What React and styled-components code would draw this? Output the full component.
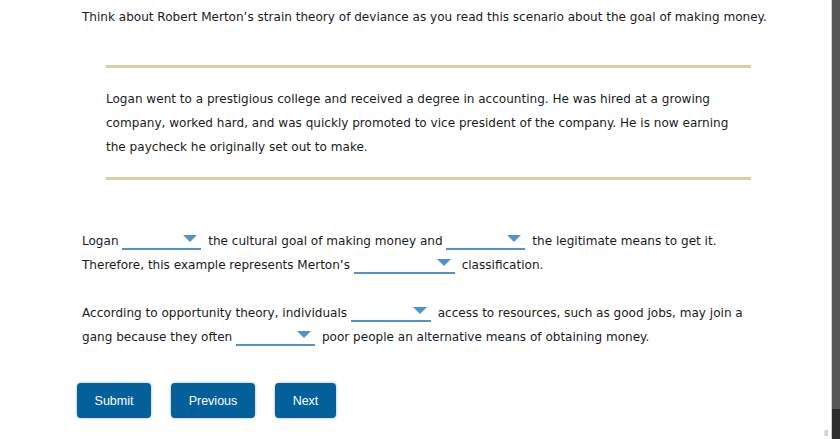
import React from "react";
import styled, { createGlobalStyle } from "styled-components";

const Global = createGlobalStyle`
  html, body { margin: 0; padding: 0; background: #fff; }
  body { font-family: "DejaVu Sans", Verdana, sans-serif; color: #1a1a1a; overflow: hidden; }
`;

const Page = styled.div`
  width: 832px;
  height: 439px;
  box-sizing: border-box;
  padding: 9px 0 0 82px;
  font-size: 12.05px;
`;

const Intro = styled.p`
  margin: 0;
  line-height: 17px;
`;

const Passage = styled.div`
  margin: 39px 0 0 24px;
  width: 645px;
  border-top: 3px solid #d9cfa1;
  border-bottom: 3px solid #d9cfa1;
  padding: 19px 0 18px;
  box-sizing: border-box;
`;

const PassageText = styled.p`
  margin: 0;
  line-height: 24px;
  width: 630px;
`;

const Question = styled.p`
  margin: ${(p) => p.$top}px 0 0;
  line-height: 24px;
  width: 670px;
`;

const Select = styled.span`
  display: inline-block;
  position: relative;
  width: ${(p) => p.$w}px;
  height: 16px;
  margin: 0 3px 0 0;
  vertical-align: -5px;
  border-bottom: 2px solid #5094cc;
`;

const Arrow = styled.span`
  position: absolute;
  right: 4px;
  top: 3px;
  width: 0;
  height: 0;
  border-left: 7px solid transparent;
  border-right: 7px solid transparent;
  border-top: 7px solid #5094cc;
`;

const Buttons = styled.div`
  display: flex;
  gap: 20px;
  margin: 34px 0 0 -5px;
`;

const Button = styled.button`
  height: 35px;
  width: ${(p) => p.$w}px;
  border: none;
  border-radius: 4px;
  background: #03609a;
  color: #fff;
  font-family: "Liberation Sans", Arial, sans-serif;
  font-size: 12.5px;
  box-shadow: 0 0 3px rgba(0, 0, 0, 0.35);
  padding: 0;
`;

const ScrollTrack = styled.div`
  position: fixed;
  top: 0;
  right: 0;
  width: 8px;
  height: 439px;
  background: #575757;
  border-left: 1px solid #d0d0d0;
`;

const ScrollEnd = styled.div`
  position: absolute;
  bottom: 0;
  left: 0;
  width: 8px;
  height: 30px;
  background: #2e2e2e;
`;

const Grip = styled.div`
  position: fixed;
  right: 12px;
  bottom: 3px;
  width: 4px;
  height: 6px;
  background: linear-gradient(90deg, #e4e4e4, #c8c8c8);
`;

const Drop = ({ w }) => (
  <Select $w={w}>
    <Arrow />
  </Select>
);

export default function App() {
  return (
    <>
      <Global />
      <Page>
        <Intro>
          Think about Robert Merton’s strain theory of deviance as you read this scenario about the goal of making money.
        </Intro>
        <Passage>
          <PassageText>
            Logan went to a prestigious college and received a degree in accounting. He was hired at a growing
            company, worked hard, and was quickly promoted to vice president of the company. He is now earning
            the paycheck he originally set out to make.
          </PassageText>
        </Passage>
        <Question $top={49}>
          Logan <Drop w={79} /> the cultural goal of making money and <Drop w={79} /> the legitimate means to get it.
          Therefore, this example represents Merton’s <Drop w={101} /> classification.
        </Question>
        <Question $top={24}>
          According to opportunity theory, individuals <Drop w={80} /> access to resources, such as good jobs, may join a
          gang because they often <Drop w={79} /> poor people an alternative means of obtaining money.
        </Question>
        <Buttons>
          <Button $w={74}>Submit</Button>
          <Button $w={84}>Previous</Button>
          <Button $w={61}>Next</Button>
        </Buttons>
      </Page>
      <ScrollTrack>
        <ScrollEnd />
      </ScrollTrack>
      <Grip />
    </>
  );
}
